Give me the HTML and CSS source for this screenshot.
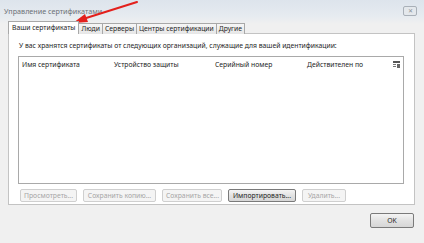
FILE: index.html
```html
<!DOCTYPE html>
<html lang="ru">
<head>
    <meta charset="utf-8" />
    <title>Управление сертификатами</title>
    <link rel="stylesheet" href="styles.css">
</head>
<body>
    <div class="window">
        <div class="titlebar">
            <span class="title">Управление сертификатами</span>
            <span class="close">&#x2715;</span>
        </div>
        <div class="tabs">
            <div class="tab active">Ваши сертификаты</div>
            <div class="tab">Люди</div>
            <div class="tab">Серверы</div>
            <div class="tab">Центры сертификации</div>
            <div class="tab">Другие</div>
        </div>
        <div class="panel">
            <p class="desc">У вас хранятся сертификаты от следующих организаций, служащие для вашей идентификации:</p>
            <div class="list">
                <div class="list-head">
                    <span class="col col-name">Имя сертификата</span>
                    <span class="col col-dev">Устройство защиты</span>
                    <span class="col col-serial">Серийный номер</span>
                    <span class="col col-exp">Действителен по</span>
                    <svg class="col-pick" width="7" height="7" viewBox="0 0 7 7">
                        <rect x="0" y="0" width="7" height="2" fill="#555"/>
                        <rect x="0" y="3" width="3" height="1" fill="#777"/>
                        <rect x="0" y="5" width="3" height="1" fill="#777"/>
                        <rect x="4" y="3" width="3" height="4" fill="#666"/>
                    </svg>
                </div>
            </div>
            <div class="buttons">
                <button class="btn" disabled>Просмотреть...</button>
                <button class="btn" disabled>Сохранить копию...</button>
                <button class="btn" disabled>Сохранить все...</button>
                <button class="btn btn-on">Импортировать...</button>
                <button class="btn" disabled>Удалить...</button>
            </div>
        </div>
        <div class="footer">
            <button class="btn btn-on btn-ok">OK</button>
        </div>
    </div>

    <svg class="arrow" width="150" height="30" viewBox="0 0 150 30">
        <line x1="137" y1="2" x2="83" y2="19" stroke="#e3201c" stroke-width="2" stroke-linecap="round"/>
        <polygon points="73,23 85,14 88,22" fill="#e3201c"/>
    </svg>
</body>
</html>
```

FILE: styles.css
```css
body {
    margin: 0;
    background-color: #f0f0f0;
    font-family: "Noto Sans", "Open Sans", sans-serif;
    font-size: 6.8px;
    color: #1e1e1e;
}

.window {
    width: 424px;
    height: 243px;
    display: flex;
    flex-direction: column;
    background: linear-gradient(#dde4ec 0px, #e6ebf0 16px, #f0f0f0 24px);
}

.titlebar {
    height: 21px;
    display: flex;
    align-items: center;
    justify-content: space-between;
    padding: 0 7px 0 4px;
}

.title {
    color: #6d7176;
    font-size: 7.2px;
}

.close {
    width: 12px;
    height: 8px;
    border: 1px solid #a9b0b8;
    border-radius: 2px;
    background: #e4e8ec;
    color: #8a9097;
    font-size: 6px;
    line-height: 8px;
    text-align: center;
}

.tabs {
    display: flex;
    align-items: flex-end;
    height: 13px;
    margin: 0 0 -1px 8px;
    position: relative;
    z-index: 1;
}

.tab {
    height: 10px;
    line-height: 10px;
    padding: 0 2px;
    border: 1px solid #a8a8a8;
    border-bottom: none;
    border-left: none;
    background: linear-gradient(#f6f6f6, #e6e6e6);
    white-space: nowrap;
}

.tab.active {
    height: 12px;
    line-height: 11px;
    border-left: 1px solid #a8a8a8;
    background: #ffffff;
    padding: 0 3px;
}

.panel {
    height: 170px;
    margin: 0 9px 0 8px;
    border: 1px solid #c3c3c3;
    background: #ffffff;
    display: flex;
    flex-direction: column;
}

.desc {
    margin: 7px 0 0 10px;
    white-space: nowrap;
}

.list {
    height: 126px;
    margin: 6px 10px 0 9px;
    border: 1px solid #a9a9a9;
    background: #ffffff;
}

.list-head {
    display: flex;
    align-items: center;
    height: 12px;
    padding-top: 1px;
}

.col {
    white-space: nowrap;
}

.col-name {
    width: 92px;
    padding-left: 3px;
}

.col-dev {
    width: 101px;
}

.col-serial {
    width: 92px;
}

.col-exp {
    flex: 1;
}

.col-pick {
    margin-right: 3px;
}

.buttons {
    display: flex;
    gap: 6px;
    margin: 5px 0 0 11px;
}

.btn {
    height: 13px;
    padding: 0 3px;
    font-family: inherit;
    font-size: 6.8px;
    line-height: 11px;
    border: 1px solid #cfcfcf;
    border-radius: 2px;
    background: #f4f4f4;
    color: #a6a6a6;
    white-space: nowrap;
}

.btn:nth-child(1) { width: 57px; }
.btn:nth-child(2) { width: 73px; }
.btn:nth-child(3) { width: 60px; }
.btn:nth-child(4) { width: 68px; }
.btn:nth-child(5) { width: 44px; }

.btn-on {
    border-color: #7a7a7a;
    background: linear-gradient(#f4f4f4, #e2e2e2 50%, #d6d6d6);
    color: #1e1e1e;
}

.footer {
    display: flex;
    justify-content: flex-end;
    padding: 8px 10px 0 0;
}

.btn.btn-ok {
    width: 44px;
    height: 15px;
}

.arrow {
    position: absolute;
    left: 0;
    top: 0;
}
```
